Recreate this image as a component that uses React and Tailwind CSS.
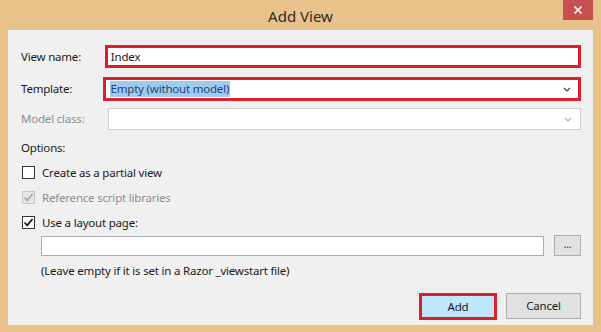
import React from 'react';

const font = { fontFamily: '"Segoe UI", "Noto Sans", "Open Sans", sans-serif' };

const Chevron = ({ color = '#444' }) => (
  <svg width="8" height="5" viewBox="0 0 8 5" className="shrink-0">
    <path d="M1 1 L4 4 L7 1" fill="none" stroke={color} strokeWidth="1.2" />
  </svg>
);

const CheckBox = ({ checked, disabled }) => (
  <span
    className={`w-[13px] h-[13px] shrink-0 flex items-center justify-center border ${
      disabled ? 'border-[#c6c6c6] bg-[#e6e6e6]' : 'border-[#333] bg-white'
    }`}
  >
    {checked && (
      <svg width="11" height="11" viewBox="0 0 11 11">
        <path
          d="M1.5 5.5 L4.2 8.3 L9.5 2"
          fill="none"
          stroke={disabled ? '#a8a8a8' : '#1a1a1a'}
          strokeWidth="1.8"
        />
      </svg>
    )}
  </span>
);

const OptionRow = ({ label, checked, disabled }) => (
  <div className="h-[25px] flex items-center gap-[7px]">
    <CheckBox checked={checked} disabled={disabled} />
    <span className={disabled ? 'text-[#8d8d8d]' : 'text-[#1a1a1a]'}>{label}</span>
  </div>
);

export default function App() {
  return (
    <div
      className="w-[601px] h-[332px] bg-[#e9c18b] flex flex-col text-[11.5px] leading-[16px] tracking-[-0.2px] text-[#1a1a1a]"
      style={font}
    >
      {/* title bar */}
      <div className="h-[30px] relative flex items-center justify-center shrink-0">
        <span className="text-[15px] tracking-normal text-[#2b2b2b] pt-[1px]">Add View</span>
        <button className="absolute right-[8px] top-0 w-[30px] h-[20px] bg-[#c75050] flex items-center justify-center">
          <svg width="10" height="10" viewBox="0 0 10 10">
            <path d="M1.5 1.5 L8.5 8.5 M8.5 1.5 L1.5 8.5" stroke="white" strokeWidth="1.6" />
          </svg>
        </button>
      </div>

      {/* client area */}
      <div className="mx-[8px] h-[295px] bg-[#f0f0f0] flex flex-col pl-[13px] pr-[12px]">
        <div className="mt-[15px] flex items-center">
          <span className="w-[84px]">View name:</span>
          <div className="w-[477px] h-[23px] bg-white border-[3px] border-[#d8212b] flex items-center pl-[3px]">
            Index
          </div>
        </div>

        <div className="mt-[9px] flex items-center">
          <span className="w-[82px]">Template:</span>
          <div className="w-[481px] h-[24px] bg-white border-[3px] border-[#d8212b] flex items-center justify-between pl-[4px] pr-[7px]">
            <span className="bg-[#9fcbf1] text-[#1f4478] px-[1px]">Empty (without model)</span>
            <Chevron />
          </div>
        </div>

        <div className="mt-[7px] flex items-center">
          <span className="w-[87px] text-[#8d8d8d]">Model class:</span>
          <div className="w-[473px] h-[22px] bg-white border border-[#cfcfcf] flex items-center justify-end pr-[8px]">
            <Chevron color="#b0b0b0" />
          </div>
        </div>

        <div className="mt-[10px]">Options:</div>
        <div className="mt-[4px] flex flex-col pl-[1px]">
          <OptionRow label="Create as a partial view" />
          <OptionRow label="Reference script libraries" checked disabled />
          <OptionRow label="Use a layout page:" checked />
        </div>

        <div className="pl-[20px] flex items-center gap-[10px]">
          <div className="w-[503px] h-[20px] bg-white border border-[#abadb3]" />
          <button className="w-[27px] h-[21px] bg-[#e1e1e1] border border-[#adadad] flex items-center justify-center text-[10px] leading-none pb-[3px]">
            ...
          </button>
        </div>

        <div className="pl-[20px] mt-[7px]">(Leave empty if it is set in a Razor _viewstart file)</div>

        <div className="mt-auto mb-[5px] flex justify-end items-start gap-[9px]">
          <button className="w-[78px] h-[27px] border-[3px] border-[#d8212b] bg-[#bee6fd] flex items-center justify-center">
            Add
          </button>
          <button className="w-[75px] h-[26px] border border-[#adadad] bg-[#e1e1e1] flex items-center justify-center">
            Cancel
          </button>
        </div>
      </div>
    </div>
  );
}
